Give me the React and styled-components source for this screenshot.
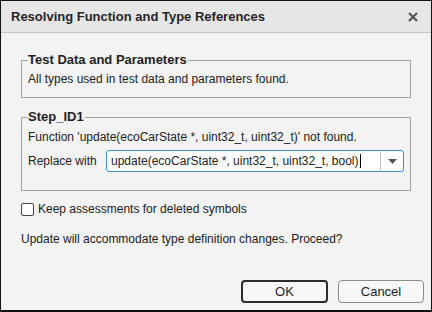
import React from 'react';
import styled, { createGlobalStyle } from 'styled-components';

const Global = createGlobalStyle`
  html, body {
    margin: 0;
    padding: 0;
    background: #f3f3f3;
  }
  body {
    font-family: "Liberation Sans", Arial, sans-serif;
    font-size: 12px;
    color: #212121;
  }
`;

const Window = styled.div`
  box-sizing: border-box;
  width: 432px;
  height: 312px;
  border: 1px solid #111;
  border-bottom-width: 2px;
  background: #f3f3f3;
  display: flex;
  flex-direction: column;
`;

const TitleBar = styled.div`
  height: 31px;
  background: #e6e6e6;
  border-bottom: 1px solid #c2c2c2;
  display: flex;
  align-items: center;
  justify-content: space-between;
  padding: 0 10px;
`;

const Title = styled.div`
  font-weight: bold;
  font-size: 13px;
  color: #262626;
`;

const Close = styled.button`
  border: none;
  background: none;
  padding: 0;
  width: 14px;
  height: 14px;
  display: flex;
  align-items: center;
  justify-content: center;
  margin-right: 1px;
`;

const Body = styled.div`
  flex: 1;
  display: flex;
  flex-direction: column;
  padding-top: 19px;
`;

const Group = styled.fieldset`
  margin: ${p => p.$top || 0}px 20px 0;
  padding: 0 6px ${p => p.$bottom}px;
  border: 1px solid #a3a3a3;
  min-width: 0;
`;

const Legend = styled.legend`
  font-weight: bold;
  font-size: 13px;
  line-height: 16px;
  padding: 0 1px 0 0;
  color: #1f1f1f;
`;

const Line = styled.div`
  line-height: 16px;
  margin-top: ${p => p.$top || 0}px;
`;

const ReplaceRow = styled.div`
  display: flex;
  align-items: center;
  margin-top: 5px;
`;

const ReplaceLabel = styled.div`
  width: 78px;
  flex: none;
`;

const Combo = styled.div`
  flex: 1;
  height: 22px;
  box-sizing: border-box;
  border: 1px solid #3b8fe0;
  border-radius: 3px;
  background: #fff;
  display: flex;
  align-items: stretch;
`;

const ComboText = styled.div`
  flex: 1;
  display: flex;
  align-items: center;
  padding-left: 4px;
  white-space: nowrap;
  overflow: hidden;
`;

const Caret = styled.span`
  display: inline-block;
  width: 1px;
  height: 14px;
  background: #000;
  margin-left: 1px;
`;

const ComboButton = styled.div`
  width: 22px;
  border-left: 1px solid #b5b5b5;
  margin: 1px 0;
  display: flex;
  align-items: center;
  justify-content: center;
`;

const CheckRow = styled.label`
  display: flex;
  align-items: center;
  margin: 10px 20px 0;
  line-height: 16px;
`;

const Box = styled.span`
  width: 13px;
  height: 13px;
  box-sizing: border-box;
  border: 1px solid #444;
  border-radius: 2px;
  background: #fff;
  margin-right: 4px;
`;

const Note = styled.div`
  margin: 14px 20px 0;
  line-height: 16px;
`;

const Footer = styled.div`
  margin-top: auto;
  display: flex;
  justify-content: flex-end;
  gap: 10px;
  padding: 0 7px 7px 0;
`;

const Button = styled.button`
  box-sizing: border-box;
  width: ${p => p.$w}px;
  height: 23px;
  font-family: "Liberation Sans", Arial, sans-serif;
  font-size: 13px;
  color: #1f1f1f;
  background: #f7f7f7;
  border: ${p => (p.$primary ? '2px solid #2b2b2b' : '1px solid #8c8c8c')};
  border-radius: 4px;
  padding: 0;
`;

export default function App() {
  return (
    <Window>
      <Global />
      <TitleBar>
        <Title>Resolving Function and Type References</Title>
        <Close aria-label="Close">
          <svg width="10" height="10" viewBox="0 0 10 10">
            <path d="M1 1 L9 9 M9 1 L1 9" stroke="#555" strokeWidth="2.2" />
          </svg>
        </Close>
      </TitleBar>
      <Body>
        <Group $bottom={10}>
          <Legend>Test Data and Parameters</Legend>
          <Line $top={3}>All types used in test data and parameters found.</Line>
        </Group>
        <Group $top={11} $bottom={18}>
          <Legend>Step_ID1</Legend>
          <Line $top={4}>Function 'update(ecoCarState *, uint32_t, uint32_t)' not found.</Line>
          <ReplaceRow>
            <ReplaceLabel>Replace with</ReplaceLabel>
            <Combo>
              <ComboText>
                update(ecoCarState *, uint32_t, uint32_t, bool)<Caret />
              </ComboText>
              <ComboButton>
                <svg width="9" height="5" viewBox="0 0 9 5">
                  <path d="M0 0 H9 L4.5 5 Z" fill="#555" />
                </svg>
              </ComboButton>
            </Combo>
          </ReplaceRow>
        </Group>
        <CheckRow>
          <Box />
          Keep assessments for deleted symbols
        </CheckRow>
        <Note>Update will accommodate type definition changes. Proceed?</Note>
        <Footer>
          <Button $primary $w={87}>OK</Button>
          <Button $w={86}>Cancel</Button>
        </Footer>
      </Body>
    </Window>
  );
}
